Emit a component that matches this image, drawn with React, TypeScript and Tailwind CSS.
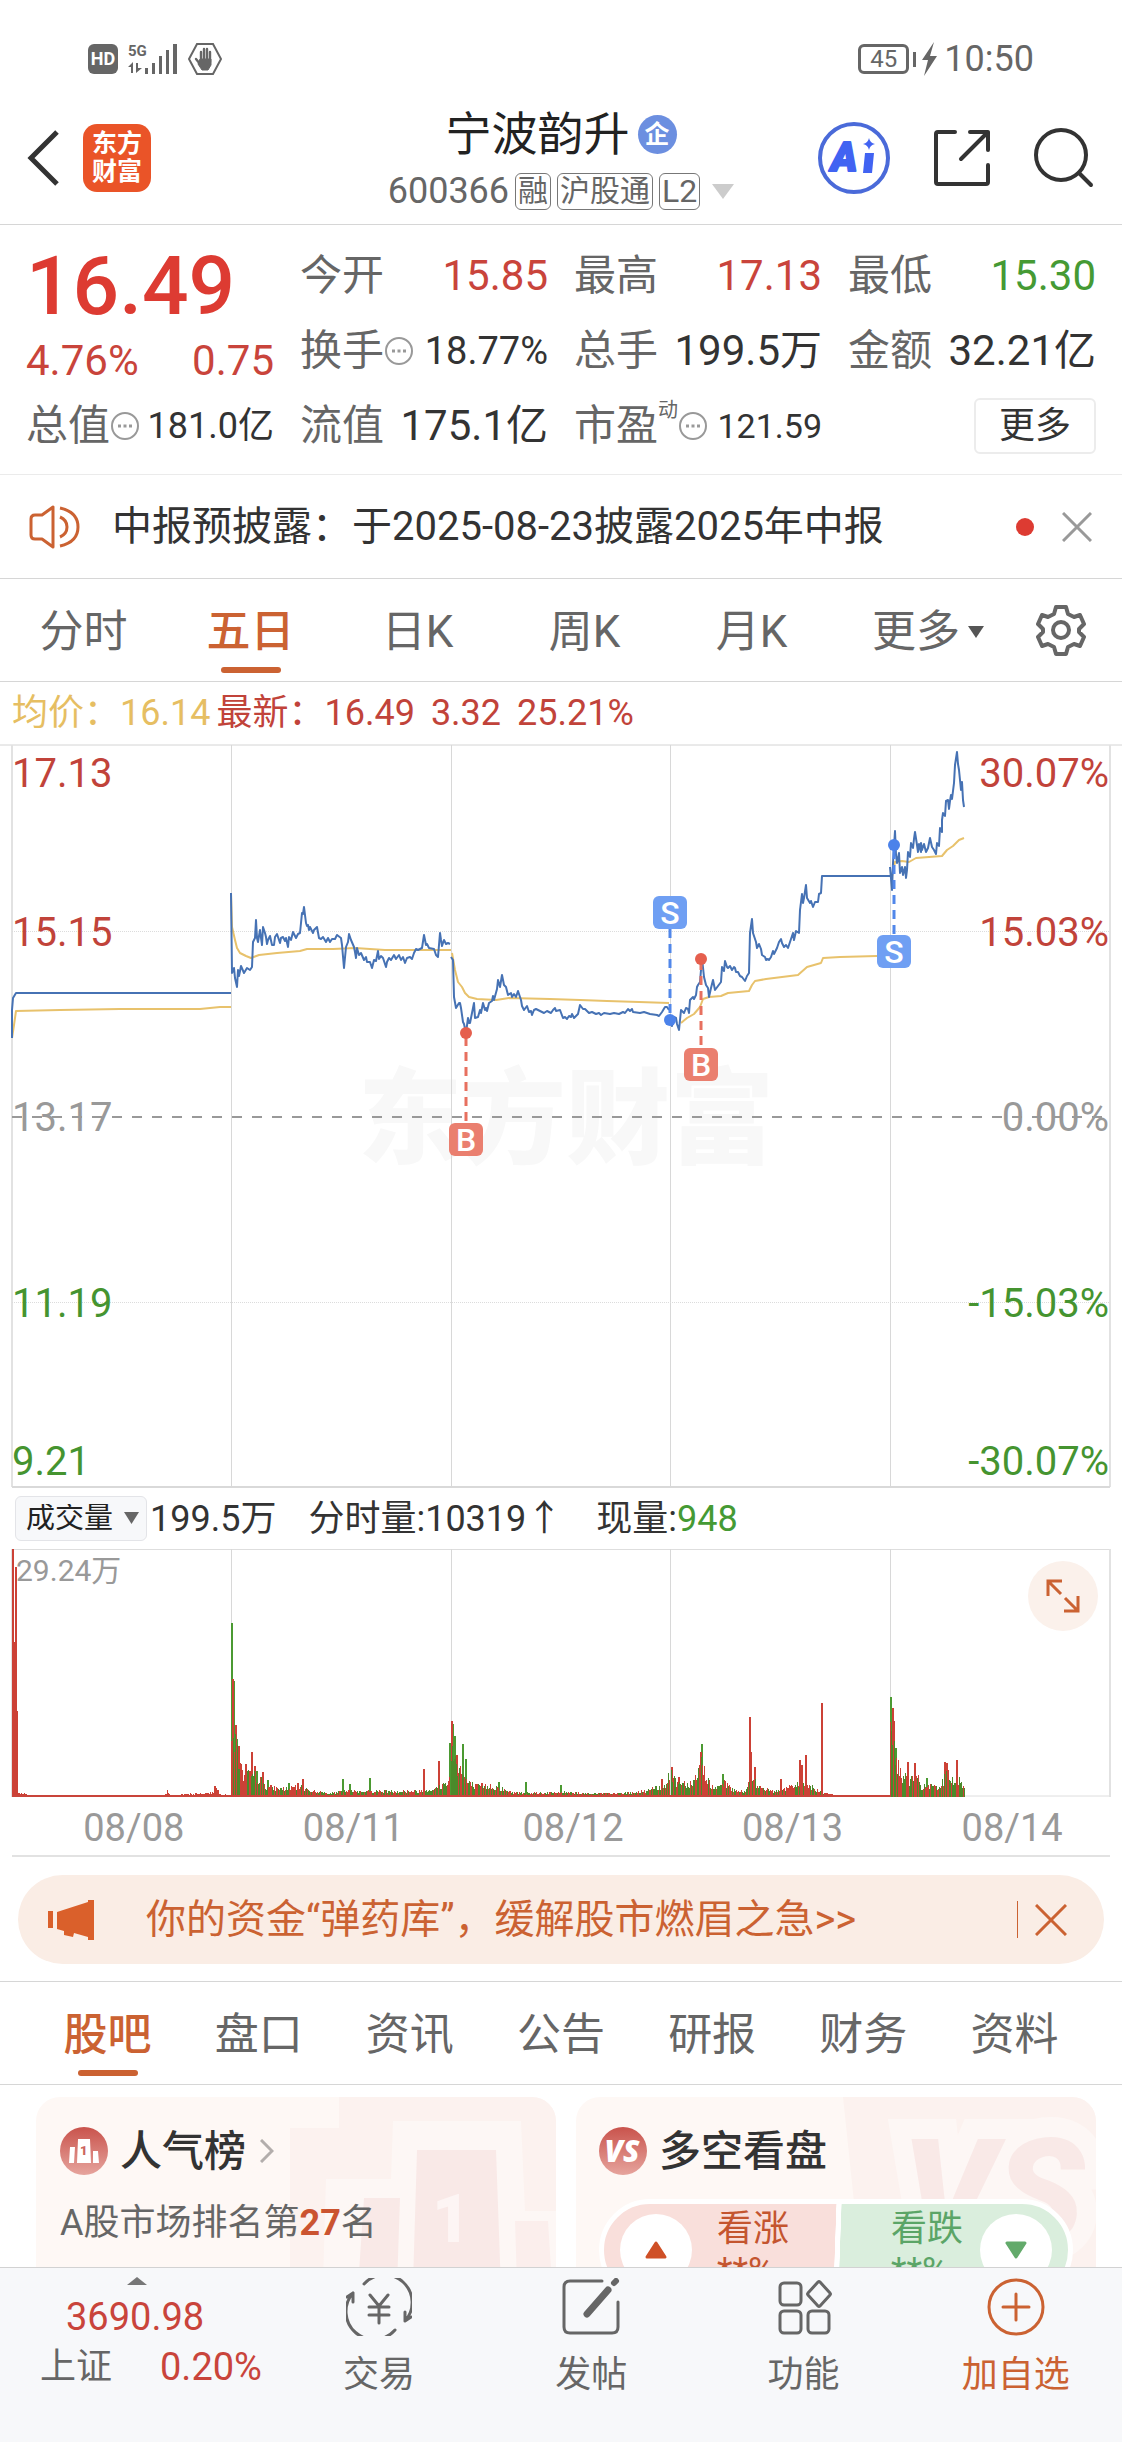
import { useState } from "react";
import type { ReactNode } from "react";

type Bar = { x: number; h: number; up: boolean };

const PRICE_LINES = [
  "12,1038 12,1010 13,998 16,993 231,993",
  "231,893 232,973 234,968 235,978 237,987 238,970 239,976 241,966 244,973 247,968 250,970 252,967 253,942 255,938 256,920 257,938 258,942 260,930 261,938 262,945 263,927 265,933 266,937 267,944 268,940 270,936 272,945 274,945 275,937 277,934 280,943 281,938 283,937 285,941 286,938 288,947 289,937 291,940 293,932 295,936 296,938 298,934 300,933 302,913 303,914 304,907 306,923 307,926 308,925 309,930 310,927 313,933 314,930 317,927 319,938 321,939 323,937 326,942 328,938 330,942 332,939 335,939 337,935 341,938 342,945 344,968 346,947 348,942 349,934 351,940 354,947 355,952 356,958 357,948 359,955 361,953 364,960 366,957 367,962 370,962 372,968 374,960 376,961 378,951 379,959 381,956 383,958 386,967 387,962 389,958 391,960 394,955 396,959 399,955 401,960 403,957 405,963 407,958 410,957 412,959 414,953 416,949 418,950 422,948 424,935 426,945 427,944 429,948 434,949 436,955 438,957 440,933 441,940 442,946 444,940 446,944 448,943 450,944",
  "451,957 453,960 454,997 456,1008 459,1003 460,1003 461,1008 463,1022 464,1024 466,1033 468,1018 469,1023 470,1023 472,1013 474,1003 475,1018 478,1017 480,1010 481,1013 483,1003 485,1010 486,1008 487,1011 489,1003 492,1001 493,996 494,1000 497,989 498,980 500,987 502,975 504,985 506,987 508,995 511,993 512,997 514,994 516,997 518,991 521,1000 522,1006 524,1010 527,1006 529,1012 531,1011 532,1015 534,1010 536,1009 540,1011 544,1013 547,1011 551,1013 553,1010 555,1008 556,1011 560,1010 563,1018 565,1017 567,1019 569,1016 571,1017 572,1014 574,1018 576,1016 578,1014 580,1005 583,1009 585,1009 589,1013 592,1012 596,1014 599,1013 601,1015 604,1013 610,1014 614,1013 619,1014 623,1012 625,1013 628,1009 630,1011 632,1009 633,1012 640,1013 644,1012 650,1014 657,1015 659,1016 662,1012 665,1007 667,1007 669,1010",
  "671,1020 672,1026 674,1017 676,1018 677,1024 679,1030 680,1020 681,1010 684,1013 686,1008 688,1009 689,1013 690,1000 692,998 693,997 694,999 696,995 697,987 698,985 700,982 702,958 704,977 706,985 708,988 709,997 711,988 713,980 715,990 718,986 721,982 722,967 724,971 725,961 727,967 728,968 730,966 732,970 734,967 735,968 736,972 738,972 740,976 742,977 745,981 747,976 749,973 750,933 752,919 753,933 756,942 757,948 759,944 761,949 762,955 765,957 766,960 768,959 769,960 771,957 773,951 774,954 777,948 779,942 781,939 782,943 784,947 786,945 788,948 790,942 793,933 794,940 796,931 799,933 800,910 802,894 803,903 804,898 806,885 807,898 810,903 811,901 813,907 815,902 818,902 819,894 821,893 822,876 890,876",
  "890,867 892,890 893,863 895,831 896,855 897,863 899,853 900,873 902,867 903,875 905,867 906,878 907,870 908,852 910,857 911,843 913,848 914,839 915,832 917,845 918,852 919,844 921,852 921,843 922,850 924,844 926,852 928,848 930,838 932,847 934,850 936,854 937,843 939,846 940,828 942,832 942,820 943,813 945,816 946,801 948,800 949,809 950,801 951,795 952,799 954,783 955,765 957,752 958,764 959,770 961,790 962,782 963,800 964,807",
];

const AVERAGE_LINES = [
  "12,1038 14,1025 16,1011 60,1010 120,1009 200,1009 220,1007 231,1007",
  "231,893 232,927 235,940 237,948 240,953 246,956 251,958 259,955 277,953 300,951 307,949 333,949 355,948 385,950 451,950",
  "452,953 455,970 458,982 462,987 465,993 469,997 477,999 496,1000 509,998 550,999 580,1000 607,1001 639,1002 669,1003",
  "681,1023 687,1018 694,1014 700,1007 703,999 709,997 721,996 728,993 749,991 752,985 755,981 766,979 782,977 798,975 807,967 821,963 823,958 840,957 877,956",
  "892,876 895,862 902,861 909,862 916,858 942,856 947,850 953,846 959,840 964,838",
];

const DAY_LINES = [231, 451, 670, 890];

const VOLUME_ENVELOPES: [number, number][][] = [
  [[12, 3], [26, 3], [30, 1], [164, 1], [167, 6], [170, 1], [212, 4], [216, 9], [221, 2], [230, 1]],
  [[231, 70], [235, 65], [238, 48], [242, 26], [250, 24], [258, 22], [266, 12], [275, 9], [290, 9], [300, 13], [308, 7], [330, 3], [345, 6], [380, 6], [420, 6], [435, 9], [445, 15], [450, 22]],
  [[451, 54], [457, 40], [462, 27], [468, 15], [480, 10], [490, 12], [500, 9], [512, 4], [560, 4], [570, 5], [585, 3], [620, 3], [640, 5], [655, 9], [663, 13], [670, 24]],
  [[671, 26], [676, 17], [690, 15], [696, 24], [702, 42], [706, 20], [715, 8], [725, 15], [735, 6], [745, 5], [752, 28], [757, 10], [775, 6], [785, 8], [800, 15], [808, 13], [818, 6], [826, 4], [833, 1], [889, 1]],
  [[890, 82], [896, 42], [900, 26], [905, 22], [912, 20], [917, 22], [922, 10], [930, 12], [938, 9], [942, 18], [947, 30], [950, 16], [957, 26], [960, 14], [965, 9]],
];

const VOLUME_SPIKES: Bar[] = [
  { x: 13, h: 247, up: true }, { x: 14, h: 154, up: true }, { x: 16, h: 229, up: true }, { x: 17, h: 85, up: true },
  { x: 215, h: 10, up: true }, { x: 232, h: 173, up: false }, { x: 234, h: 115, up: false }, { x: 233, h: 117, up: true },
  { x: 236, h: 71, up: true }, { x: 237, h: 57, up: false }, { x: 239, h: 50, up: true }, { x: 246, h: 32, up: true },
  { x: 252, h: 44, up: true }, { x: 255, h: 30, up: true }, { x: 257, h: 25, up: false }, { x: 263, h: 24, up: true },
  { x: 268, h: 16, up: false }, { x: 289, h: 13, up: false }, { x: 303, h: 17, up: true }, { x: 343, h: 17, up: false },
  { x: 350, h: 12, up: false }, { x: 370, h: 18, up: false }, { x: 424, h: 27, up: true }, { x: 439, h: 35, up: true },
  { x: 450, h: 53, up: false }, { x: 452, h: 75, up: true }, { x: 453, h: 72, up: false }, { x: 455, h: 60, up: false },
  { x: 457, h: 41, up: true }, { x: 463, h: 52, up: false }, { x: 466, h: 37, up: false }, { x: 482, h: 13, up: true },
  { x: 499, h: 14, up: false }, { x: 526, h: 14, up: false }, { x: 561, h: 11, up: false }, { x: 662, h: 17, up: true },
  { x: 672, h: 29, up: true }, { x: 679, h: 19, up: true }, { x: 701, h: 44, up: true }, { x: 702, h: 52, up: false },
  { x: 723, h: 22, up: false }, { x: 750, h: 79, up: true }, { x: 751, h: 44, up: true }, { x: 755, h: 29, up: true },
  { x: 781, h: 17, up: true }, { x: 800, h: 36, up: true }, { x: 802, h: 31, up: true }, { x: 806, h: 41, up: true },
  { x: 822, h: 93, up: true }, { x: 891, h: 99, up: false }, { x: 893, h: 88, up: true }, { x: 894, h: 75, up: true },
  { x: 896, h: 48, up: false }, { x: 908, h: 34, up: true }, { x: 915, h: 33, up: true }, { x: 927, h: 18, up: false },
  { x: 945, h: 34, up: true }, { x: 947, h: 33, up: true }, { x: 957, h: 36, up: true },
];

function buildVolume(): Bar[] {
  let seed = 7;
  const next = () => {
    seed = (seed * 1103515245 + 12345) % 2147483648;
    return seed / 2147483648;
  };
  const bars: Bar[] = [];
  VOLUME_ENVELOPES.forEach((env, day) => {
    for (let i = 0; i < env.length - 1; i++) {
      const [x0, h0] = env[i];
      const [x1, h1] = env[i + 1];
      for (let x = x0; x < x1; x++) {
        const h = h0 + ((h1 - h0) * (x - x0)) / (x1 - x0);
        const calm = day === 0 || (day === 3 && x > 826);
        bars.push({ x: x + 0.5, h: Math.max(1, Math.round(h * (0.5 + 0.6 * next()))), up: calm || next() > 0.5 });
      }
    }
  });
  return bars;
}

const VOLUME = buildVolume();
const barsPath = (bars: Bar[]) => bars.map((b) => `M${b.x} 248V${247 - b.h}`).join("");

function Badge({ x, y, letter }: { x: number; y: number; letter: "B" | "S" }) {
  return (
    <g>
      <rect x={x} y={y} width="34" height="33" rx="6" fill={letter === "B" ? "#ea7f6f" : "#6f9ff3"} />
      <text x={x + 17} y={y + 28} textAnchor="middle" fontSize="32" fontWeight="500" fill="#fff">
        {letter}
      </text>
    </g>
  );
}

function PriceChart() {
  const left: [string, number, string][] = [
    ["17.13", 787, "#c1433a"], ["15.15", 946, "#c1433a"], ["13.17", 1131, "#999"], ["11.19", 1317, "#459430"], ["9.21", 1475, "#459430"],
  ];
  const right: [string, number, string][] = [
    ["30.07%", 787, "#c1433a"], ["15.03%", 946, "#c1433a"], ["0.00%", 1131, "#999"], ["-15.03%", 1317, "#459430"], ["-30.07%", 1475, "#459430"],
  ];
  return (
    <svg viewBox="0 744 1122 744" className="block h-auto w-full" role="img" aria-label="五日走势图">
      <g fontSize="104" fontWeight="900" fill="#f8f8f8">
        <text x="358" y="1156">东方财富</text>
      </g>
      <path d="M0 745H1122" stroke="#d4d4d4" />
      <path d="M12 745V1487M1110 745V1487" stroke="#e2e2e2" strokeWidth="2" />
      <path d="M12 1487H1110" stroke="#d9d9d9" strokeWidth="2" />
      {DAY_LINES.map((x) => (
        <path key={x} d={`M${x}.5 745V1487`} stroke="#d8d8d8" />
      ))}
      <path d="M12 931.5H1110M12 1302.5H1110" stroke="#dcdcdc" strokeDasharray="1 1" />
      <path d="M12 1117H1110" stroke="#999" strokeWidth="2" strokeDasharray="10 10" />
      <g fill="none" strokeLinejoin="round" strokeWidth="2">
        {AVERAGE_LINES.map((p) => <polyline key={p} points={p} stroke="#e8c26c" />)}
        {PRICE_LINES.map((p) => <polyline key={p} points={p} stroke="#4672b4" />)}
      </g>
      <g strokeWidth="3" strokeDasharray="9 6">
        <path d="M466 1037V1123M701 961V1048" stroke="#e7705f" />
        <path d="M670 929V1016M894 850V936" stroke="#5187ea" />
      </g>
      <circle cx="466" cy="1033" r="6" fill="#e55f4e" />
      <circle cx="701" cy="959" r="6" fill="#e55f4e" />
      <circle cx="670" cy="1020" r="6" fill="#4b82ea" />
      <circle cx="894" cy="845" r="6" fill="#4b82ea" />
      <Badge x={449} y={1123} letter="B" />
      <Badge x={684} y={1048} letter="B" />
      <Badge x={653} y={896} letter="S" />
      <Badge x={877} y={935} letter="S" />
      <g fontSize="40">
        {left.map(([t, y, c]) => <text key={t} x="12" y={y} fill={c}>{t}</text>)}
        {right.map(([t, y, c]) => <text key={t} x="1109" y={y} fill={c} textAnchor="end">{t}</text>)}
      </g>
    </svg>
  );
}

function VolumeChart() {
  return (
    <svg viewBox="0 0 1122 248" className="block h-auto w-full" role="img" aria-label="成交量图">
      <path d="M12 .5H1110M12 247H1110" stroke="#dedede" />
      <path d="M12 0V248M1110 0V248" stroke="#e2e2e2" strokeWidth="2" />
      {DAY_LINES.map((x) => <path key={x} d={`M${x}.5 0V248`} stroke="#d8d8d8" />)}
      <g fill="none">
        <path d={barsPath(VOLUME_SPIKES.filter((b) => !b.up))} stroke="#4b9a32" strokeWidth="2" />
        <path d={barsPath(VOLUME_SPIKES.filter((b) => b.up))} stroke="#cc4136" strokeWidth="2" />
        <path d={barsPath(VOLUME.filter((b) => !b.up))} stroke="#4b8a2a" strokeWidth="1" />
        <path d={barsPath(VOLUME.filter((b) => b.up))} stroke="#cc4136" strokeWidth="1" />
        <path d="M12 247H890" stroke="#c9443a" strokeWidth="2" />
      </g>
      <text x="16" y="32" fontSize="30" fill="#999">29.24万</text>
    </svg>
  );
}

function MoreInfo() {
  return (
    <svg viewBox="0 0 30 30" className="size-[30px] shrink-0" fill="none" stroke="#999" aria-hidden="true">
      <circle cx="15" cy="15" r="13" strokeWidth="2" />
      <path d="M8 15h3M13.500 15h3M19 15h3" strokeWidth="3" />
    </svg>
  );
}

function Quote({ label, value, info, sup, tone = "text-[#333]", size = "text-[42px]" }: {
  label: string; value: string; info?: boolean; sup?: string; tone?: string; size?: string;
}) {
  return (
    <div className="flex h-[75px] items-center justify-between whitespace-nowrap">
      <dt className="flex items-center text-[42px] text-[#666]">
        {label}
        {sup && <sup className="-top-4 text-xl">{sup}</sup>}
        {info && <MoreInfo />}
      </dt>
      <dd className={`${size} ${tone}`}>{value}</dd>
    </div>
  );
}

function NavItem({ label, children, accent }: { label: string; children: ReactNode; accent?: boolean }) {
  return (
    <button type="button" className={`flex flex-1 flex-col items-center pt-[10px] ${accent ? "text-[#cb6232]" : "text-[#666]"}`}>
      <svg viewBox="0 0 66 58" className="h-[58px] w-[66px]" fill="none" stroke="currentColor" strokeWidth="3" strokeLinecap="round" strokeLinejoin="round" aria-hidden="true">
        {children}
      </svg>
      <span className="mt-[15px] text-[36px] leading-[48px]">{label}</span>
    </button>
  );
}

const PERIODS = ["分时", "五日", "日K", "周K", "月K"];
const SECTIONS = ["股吧", "盘口", "资讯", "公告", "研报", "财务", "资料"];
const DATES = ["08/08", "08/11", "08/12", "08/13", "08/14"];

export default function App() {
  const [period, setPeriod] = useState("五日");
  const [section, setSection] = useState("股吧");

  return (
    <div className="flex h-screen flex-col overflow-hidden bg-white leading-none text-[#333] [font-family:Roboto,'Noto_Sans_CJK_SC',sans-serif]">
      <div className="flex h-[92px] shrink-0 items-center justify-between pt-[26px] pr-[88px] pl-[88px] text-[#666]">
        <div className="flex items-center gap-[10px]">
          <span className="flex h-[30px] w-[30px] items-center justify-center rounded-md bg-[#666] text-[18px] font-bold text-white">HD</span>
          <svg viewBox="0 0 50 32" className="h-8 w-[50px]" fill="currentColor" aria-hidden="true">
            <text x="0" y="13" fontSize="15" fontWeight="700">5G</text>
            <path d="M0 24l5-5v11H3v-6zM8 20v10l6-5h-4v-5zM17 25h3v6h-3zM24 20h3v11h-3zM31 13h3v18h-3zM38 7h3v24h-3zM45 1h4v30h-4z" />
          </svg>
          <svg viewBox="0 0 34 34" className="size-[34px]" fill="none" stroke="currentColor" aria-hidden="true">
            <path d="M9 2h16l8 15-8 15H9L1 17z" strokeWidth="2" />
            <path d="M13 20V10M16 18V7M19 18V7M22 20v-10M12 22l-4-5" strokeWidth="2.400" strokeLinecap="round" />
            <path d="M12 17h11v6l-3 5h-6l-4-6z" fill="currentColor" />
          </svg>
        </div>
        <div className="flex items-center">
          <span className="flex h-[30px] w-[51px] items-center justify-center rounded-md border-[3px] border-[#666] text-[24px]">45</span>
          <span className="ml-1 h-[15px] w-[3px] bg-[#666]" />
          <svg viewBox="0 0 16 34" className="mx-[6px] h-[34px] w-4" fill="currentColor" aria-hidden="true">
            <path d="M12 0L0 18h6L2 34 15 14H8z" />
          </svg>
          <span className="text-[36px]">10:50</span>
        </div>
      </div>

      <header className="grid h-[133px] shrink-0 grid-cols-[1fr_auto_1fr] items-center border-b border-[#d6d6d6] px-[26px]">
        <div className="flex items-center gap-[23px]">
          <button type="button" aria-label="返回">
            <svg viewBox="0 0 34 56" className="h-14 w-[34px]" fill="none" stroke="#333" strokeWidth="5">
              <path d="M31 2L5 28l26 26" />
            </svg>
          </button>
          <div className="flex size-[68px] flex-col items-center justify-center rounded-[14px] bg-[#ea5428] text-[25px] leading-[28px] font-bold text-white">
            <span>东方</span>
            <span>财富</span>
          </div>
        </div>
        <div className="flex flex-col items-center pt-[10px]">
          <h1 className="flex h-14 items-center gap-2 text-[46px] text-[#222]">
            宁波韵升
            <span className="flex size-[39px] items-center justify-center rounded-full bg-[#6c8fe0] text-[25px] font-bold text-white">企</span>
          </h1>
          <div className="flex h-[58px] items-center gap-[6px] text-[#666]">
            <span className="text-[36px]">600366</span>
            <span className="flex h-[37px] items-center rounded-md border border-[#777] px-[2px] text-[30px]">融</span>
            <span className="flex h-[37px] items-center rounded-md border border-[#777] px-[2px] text-[30px]">沪股通</span>
            <span className="flex h-[37px] items-center rounded-md border border-[#777] px-[2px] text-[32px]">L2</span>
            <svg viewBox="0 0 22 15" className="ml-[6px] h-[15px] w-[22px]" fill="#ccc" aria-hidden="true"><path d="M0 0h22L11 15z" /></svg>
          </div>
        </div>
        <div className="flex items-center justify-end gap-[42px]">
          <button type="button" aria-label="AI助手">
            <svg viewBox="0 0 72 72" className="size-[72px]">
              <circle cx="36" cy="36" r="34" fill="none" stroke="#4a6ad9" strokeWidth="4" />
              <text x="13" y="49" fontSize="40" fontWeight="900" fontStyle="italic" fill="#4163f2" stroke="#4163f2" strokeWidth="2" strokeLinejoin="round">A</text>
              <path d="M47 31h9l-2 20h-9zM51 16q1 5 6 6-5 1-6 6-1-5-6-6 5-1 6-6z" fill="#4163f2" />
            </svg>
          </button>
          <button type="button" aria-label="分享">
            <svg viewBox="0 0 60 60" className="size-[60px]" fill="none" stroke="#333" strokeWidth="4" strokeLinecap="round" strokeLinejoin="round">
              <path d="M23 4H6q-2 0-2 2v48q0 2 2 2h48q2 0 2-2V37M38 4h18v18M56 4L29 31" />
            </svg>
          </button>
          <button type="button" aria-label="搜索">
            <svg viewBox="0 0 62 60" className="h-[60px] w-[62px]" fill="none" stroke="#333" strokeWidth="4" strokeLinecap="round">
              <circle cx="27" cy="27" r="25" />
              <path d="M45 45l12 12" />
            </svg>
          </button>
        </div>
      </header>

      <section className="shrink-0 border-b border-[#ebebeb] px-[26px] pt-[13px] pb-[11px]">
        <dl className="grid grid-cols-4 gap-x-[26px]">
          <div className="row-span-2 text-[#c9443b]">
            <dt className="sr-only">最新价</dt>
            <dd className="flex h-24 items-center text-[82px] font-medium text-[#dd3b32]">16.49</dd>
            <dd className="flex h-[54px] items-center justify-between text-[42px]"><span>4.76%</span><span>0.75</span></dd>
          </div>
          <Quote label="今开" value="15.85" tone="text-[#c9443b]" />
          <Quote label="最高" value="17.13" tone="text-[#c9443b]" />
          <Quote label="最低" value="15.30" tone="text-[#459a34]" />
          <Quote label="换手" value="18.77%" info size="text-[38px]" />
          <Quote label="总手" value="199.5万" />
          <Quote label="金额" value="32.21亿" />
          <Quote label="总值" value="181.0亿" info size="text-[36px]" />
          <Quote label="流值" value="175.1亿" />
          <Quote label="市盈" value="121.59" sup="动" info size="text-[34px]" />
          <div className="flex items-center justify-end">
            <button type="button" className="h-14 w-[122px] rounded-md border-2 border-[#ececec] text-[36px]">更多</button>
          </div>
        </dl>
      </section>

      <div className="flex h-[104px] shrink-0 items-center border-b border-[#d6d6d6] pr-[30px] pl-[28px]">
        <svg viewBox="0 0 52 44" className="h-11 w-[52px]" fill="none" stroke="#cb6232" strokeWidth="3" strokeLinejoin="round" aria-hidden="true">
          <path d="M25 2v40L14 34H7q-4 0-4-4V14q0-4 4-4h7zM32 12q7 3 7 10t-7 10M32 3q18 4 18 19T32 41" />
        </svg>
        <p className="ml-8 flex-1 text-[40px]">中报预披露：于2025-08-23披露2025年中报</p>
        <span className="size-[18px] rounded-full bg-[#dd3b32]" />
        <button type="button" aria-label="关闭公告" className="ml-[28px]">
          <svg viewBox="0 0 30 30" className="size-[30px]" stroke="#999" strokeWidth="3"><path d="M1 1l28 28M29 1L1 29" /></svg>
        </button>
      </div>

      <nav className="flex h-[103px] shrink-0 border-b border-[#d6d6d6] pr-[21px] text-[44px] text-[#666]">
        {PERIODS.map((p) => (
          <button key={p} type="button" onClick={() => setPeriod(p)} aria-pressed={p === period}
            className={`relative flex-[167] pt-1 ${p === period ? "font-medium text-[#cb6232]" : ""}`}>
            {p}
            {p === period && <span className="absolute bottom-2 left-1/2 h-[6px] w-[60px] -translate-x-1/2 rounded-full bg-[#cb6232]" />}
          </button>
        ))}
        <button type="button" className="flex flex-[186] items-center justify-center gap-2 pt-1">
          更多
          <svg viewBox="0 0 16 12" className="h-3 w-4" fill="#555" aria-hidden="true"><path d="M0 0h16L8 12z" /></svg>
        </button>
        <button type="button" aria-label="设置" className="flex flex-[80] items-center justify-center">
          <svg viewBox="0 0 50 52" className="h-[52px] w-[50px]" fill="none" stroke="#666" strokeWidth="4" strokeLinejoin="round">
            <path d="M20 3h10l2 7 6 3 6-2 4 9-5 5v3l5 5-4 9-6-2-6 3-2 7H20l-2-7-6-3-6 2-4-9 5-5v-3l-5-5 4-9 6 2 6-3z" />
            <circle cx="25" cy="26" r="8" />
          </svg>
        </button>
      </nav>

      <div className="flex h-[62px] shrink-0 items-center pl-3 text-[36px] text-[#c1433a]">
        <span className="text-[#e6be62]">均价：16.14</span>
        <span className="ml-[6px]">最新：16.49</span>
        <span className="ml-4">3.32</span>
        <span className="ml-4">25.21%</span>
      </div>

      <div className="shrink-0"><PriceChart /></div>

      <div className="flex h-[61px] shrink-0 items-center px-[15px] text-[36px]">
        <div className="relative">
          <select aria-label="指标" className="h-[45px] w-[132px] appearance-none rounded-md border border-[#e3e4e8] bg-[#f7f8fa] pl-[10px] text-[29px] text-[#222]">
            <option>成交量</option>
          </select>
          <svg viewBox="0 0 15 12" className="pointer-events-none absolute top-4 right-2 h-3 w-[15px]" fill="#666" aria-hidden="true"><path d="M0 0h15L7.500 12z" /></svg>
        </div>
        <span className="ml-[3px]">199.5万</span>
        <span className="ml-[32px]">分时量:10319↑</span>
        <span className="ml-[34px]">现量:<span className="text-[#459a34]">948</span></span>
      </div>

      <div className="relative shrink-0">
        <VolumeChart />
        <button type="button" aria-label="全屏" className="absolute top-3 right-6 flex size-[70px] items-center justify-center rounded-full bg-[#fbf1eb]">
          <svg viewBox="0 0 34 34" className="size-[34px]" fill="none" stroke="#cb6232" strokeWidth="3">
            <path d="M2 17V2h14M2 2l13 13M32 17v15H18M32 32L19 19" />
          </svg>
        </button>
      </div>

      <div className="mx-3 flex h-[60px] shrink-0 items-center border-b-2 border-[#e2e2e2] pt-1 text-[38px] text-[#999]">
        {DATES.map((d) => <span key={d} className="flex-1 pl-6 text-center">{d}</span>)}
      </div>

      <div className="mx-[18px] mt-[18px] mb-[17px] flex h-[89px] shrink-0 items-center rounded-full bg-[#faede5] pr-[37px] pl-[30px] text-[#cb6232]">
        <svg viewBox="0 0 46 40" className="h-10 w-[46px]" fill="#da602b" aria-hidden="true">
          <path d="M0 11h5v17H0zM9 12L40 2V0h6v40h-6v-3l-14-4-1 4-9-2v-4l-7-2z" />
        </svg>
        <a href="#funds" className="ml-[52px] flex-1 text-[40px]">你的资金“弹药库”，缓解股市燃眉之急&gt;&gt;</a>
        <span className="h-[37px] w-px bg-[#cb6232]" />
        <button type="button" aria-label="关闭广告" className="ml-[17px]">
          <svg viewBox="0 0 32 32" className="size-8" stroke="currentColor" strokeWidth="3"><path d="M1 1l30 30M31 1L1 31" /></svg>
        </button>
      </div>

      <nav className="flex h-[104px] shrink-0 border-y border-[#d6d6d6] px-8 text-[44px] text-[#666]">
        {SECTIONS.map((s) => (
          <button key={s} type="button" onClick={() => setSection(s)} aria-pressed={s === section}
            className={`relative flex-1 pt-1 ${s === section ? "font-medium text-[#cb6232]" : ""}`}>
            {s}
            {s === section && <span className="absolute bottom-2 left-1/2 h-[6px] w-[60px] -translate-x-1/2 rounded-full bg-[#cb6232]" />}
          </button>
        ))}
      </nav>

      <main className="grid min-h-0 flex-1 auto-rows-max grid-cols-2 gap-5 overflow-hidden px-[26px] pt-3 pr-[26px] pl-[36px]">
        <section className="relative h-[220px] overflow-hidden rounded-[24px] bg-[#fef8f5] px-6 pt-[30px]">
          <svg viewBox="254 0 266 220" className="absolute top-0 right-0 h-[220px] w-[266px]" aria-hidden="true">
            <path d="M303 0h217v220H254V31h49z" fill="#fcf2ef" />
            <path d="M357 24h128l4 90h31v106H286l4-138h65z" fill="#fdf7f5" />
            <path d="M381 53h79l6 167h-90zM328 101h36l-4 119h-40z" fill="#f9e9e7" />
            <path d="M479 124h33l6 96h-36z" fill="#fbeeec" />
            <text x="396" y="145" fontSize="66" fontWeight="900" fill="#fdf5f4">1</text>
          </svg>
          <div className="relative flex h-12 items-center">
            <svg viewBox="0 0 48 48" className="size-12" aria-hidden="true">
              <defs>
                <linearGradient id="disc" x1="0" y1="0" x2="0" y2="1"><stop stopColor="#c9534c" /><stop offset="1" stopColor="#e6a49d" /></linearGradient>
              </defs>
              <circle cx="24" cy="24" r="24" fill="url(#disc)" />
              <path d="M18 12h12l1 24H17zM10 20h5l-1 16H9zM33 24h5l1 12h-6z" fill="#fff" />
              <text x="20" y="28" fontSize="13" fontWeight="900" fill="#cc655e">1</text>
            </svg>
            <h2 className="ml-[12px] pt-[2px] text-[42px] font-medium">人气榜</h2>
            <svg viewBox="0 0 14 24" className="ml-[14px] h-6 w-[14px]" fill="none" stroke="#b3aeac" strokeWidth="3" aria-hidden="true"><path d="M1 1l11 11L1 23" /></svg>
          </div>
          <p className="relative mt-6 text-[36px] leading-[48px] text-[#666]">A股市场排名第<strong className="font-bold text-[#cb5430]">27</strong>名</p>
        </section>

        <section className="relative h-[220px] overflow-hidden rounded-[24px] bg-[#fef8f5] px-[23px] pt-[30px]">
          <svg viewBox="260 0 260 220" className="absolute top-0 right-0 h-[220px] w-[260px]" aria-hidden="true">
            <path d="M267 0h253v220h-230z" fill="#fcf2ef" />
            <text x="326" y="146" fontSize="146" fontWeight="900" fontStyle="italic" fill="#f9e9e7" stroke="#fdf7f5" strokeWidth="40" paintOrder="stroke">VS</text>
          </svg>
          <div className="relative flex h-12 items-center">
            <svg viewBox="0 0 48 48" className="size-12" aria-hidden="true">
              <circle cx="24" cy="24" r="24" fill="url(#disc)" />
              <text x="23" y="35" textAnchor="middle" fontSize="30" fontWeight="800" fontStyle="italic" fontFamily="Open Sans" fill="#fff">VS</text>
            </svg>
            <h2 className="ml-[12px] pt-[2px] text-[42px] font-medium">多空看盘</h2>
          </div>
          <div className="relative mt-6 flex h-[102px] items-center justify-between rounded-full border-[5px] border-white bg-[linear-gradient(92deg,#f9dfdb_49.7%,#fff_49.8%,#fff_50.8%,#daeedd_50.9%)] px-4 text-[36px] leading-[42px]">
            <button type="button" className="flex items-center gap-[25px] text-left text-[#c4552f]">
              <span className="flex size-[72px] items-center justify-center rounded-full bg-white">
                <svg viewBox="0 0 24 20" className="h-5 w-6" fill="#cf5027" stroke="#cf5027" strokeWidth="3" strokeLinejoin="round" aria-hidden="true"><path d="M12 3l9 14H3z" /></svg>
              </span>
              <span>看涨<br />**%</span>
            </button>
            <button type="button" className="flex items-center gap-[17px] text-left text-[#5ba567]">
              <span>看跌<br />**%</span>
              <span className="flex size-[72px] items-center justify-center rounded-full bg-white">
                <svg viewBox="0 0 24 20" className="h-5 w-6" fill="#63aa6b" stroke="#63aa6b" strokeWidth="3" strokeLinejoin="round" aria-hidden="true"><path d="M12 17L3 3h18z" /></svg>
              </span>
            </button>
          </div>
        </section>
      </main>

      <footer className="flex h-[175px] shrink-0 items-start border-t border-[#d2d2d2] bg-[#f7f8fa]">
        <button type="button" className="w-[273px] pt-[9px] text-left text-[#c9443b]">
          <svg viewBox="0 0 20 8" className="ml-[127px] block h-2 w-5" fill="#777" aria-hidden="true"><path d="M0 8L10 0l10 8z" /></svg>
          <span className="block pt-[2px] pl-[66px] text-[38px] leading-[60px]">3690.98</span>
          <span className="flex items-center gap-[48px] pl-[40px] leading-10">
            <span className="text-[36px] text-[#666]">上证</span>
            <span className="text-[38px]">0.20%</span>
          </span>
        </button>
        <NavItem label="交易">
          <path d="M18 6a27 27 0 0 1 41 37M59 43l6-4M59 43v-9M49 52A27 27 0 0 1 7 15M7 15l-6 4M7 15v9M24 17l9 11 9-11M33 28v17M23 29h20M23 37h20" />
        </NavItem>
        <NavItem label="发帖">
          <path d="M44 3H12q-6 0-6 6v40q0 6 6 6h42q6 0 6-6V24" />
          <path d="M50 12L29 36" strokeWidth="7" />
          <path d="M56 5l2-2" strokeWidth="6" />
        </NavItem>
        <NavItem label="功能">
          <rect x="9" y="5" width="21" height="22" rx="4" />
          <rect x="9" y="33" width="21" height="22" rx="4" />
          <rect x="37" y="33" width="21" height="22" rx="4" />
          <path d="M47 4q1-1 2 0l10 11q1 1 0 2L49 28q-1 1-2 0L37 17q-1-1 0-2z" />
        </NavItem>
        <NavItem label="加自选" accent>
          <circle cx="33" cy="29" r="27" />
          <path d="M33 16v26M20 29h26" />
        </NavItem>
      </footer>
    </div>
  );
}
